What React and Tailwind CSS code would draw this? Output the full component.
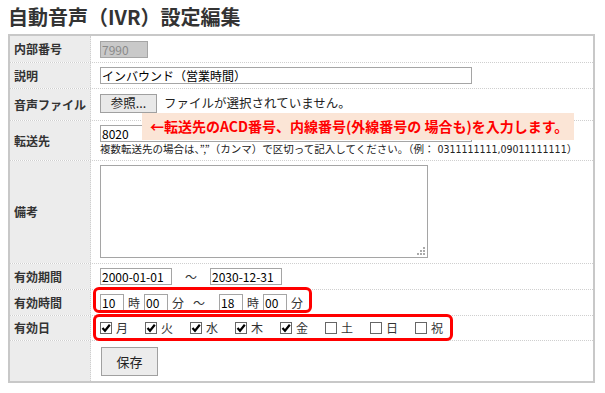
import React from "react";

const Row = ({ label, h, children, cls = "" }) => (
  <div className={`flex border-b border-dotted border-[#cfcfcf] ${h}`}>
    <div className="w-[81px] shrink-0 bg-[#ececec] border-r border-dotted border-[#cfcfcf] flex items-center pl-[4px] text-[12px] font-bold text-[#333]">
      {label}
    </div>
    <div className={`flex-1 pl-[9px] ${cls}`}>{children}</div>
  </div>
);

const Check = ({ checked, label }) => (
  <div className="flex items-center w-[45px] shrink-0">
    <span className="w-[12px] h-[12px] border border-[#666] bg-white flex items-center justify-center">
      {checked && (
        <svg width="10" height="10" viewBox="0 0 10 10">
          <path d="M1.5 5 L4 7.8 L8.8 1.8" fill="none" stroke="#000" strokeWidth="2.2" />
        </svg>
      )}
    </span>
    <span className="ml-[4px] text-[12px] text-[#333]">{label}</span>
  </div>
);

const base = "h-[17px] border border-[#a5a5a5] px-[1px] text-[12px] leading-none outline-none";
const inp = `${base} bg-white text-black`;

export default function App() {
  return (
    <div className="w-[605px] h-[393px] bg-white font-['Noto_Sans_CJK_JP',sans-serif] text-[#333] relative">
      <div className="h-[34px] flex items-center pl-[8px] text-[20px] font-bold text-[#333] leading-none">
        自動音声（IVR）設定編集
      </div>
      <div className="relative ml-[8px] w-[587px] border-2 border-[#c8c8c8]">
        <Row label="内部番号" h="h-[27px]" cls="flex items-center">
          <input disabled defaultValue="7990" className={`${base} w-[48px] bg-[#c9c9c9] text-[#8a8a8a]`} />
        </Row>
        <Row label="説明" h="h-[26px]" cls="flex items-center">
          <input defaultValue="インバウンド（営業時間）" className={`${inp} w-[372px]`} />
        </Row>
        <Row label="音声ファイル" h="h-[32px]" cls="flex items-center">
          <button className="w-[57px] h-[19px] border border-[#a0a0a0] bg-[#e9e9e9] text-[12.5px] leading-none text-[#222] flex items-center justify-center mt-[-3px]">
            参照...
          </button>
          <span className="ml-[7px] text-[12.5px] text-[#222] mt-[-3px]">ファイルが選択されていません。</span>
        </Row>
        <Row label="転送先" h="h-[40px]" cls="flex flex-col pt-[4px]">
          <input defaultValue="8020" className={`${inp} w-[372px]`} />
          <div className="text-[10.5px] leading-[14px] text-[#222] whitespace-nowrap">
            複数転送先の場合は、”,”（カンマ）で区切って記入してください。（例：<span className="font-['DejaVu_Sans_Condensed',sans-serif] text-[10.5px]"> 0311111111,09011111111</span>）
          </div>
        </Row>
        <Row label="備考" h="h-[103px]" cls="pt-[4px]">
          <div className="relative w-[328px] h-[93px] border border-[#a5a5a5] bg-white">
            <svg className="absolute right-[2px] bottom-[2px]" width="8" height="8" viewBox="0 0 8 8">
              <rect x="6" y="0" width="2" height="2" fill="#aaa" />
              <rect x="3" y="3" width="2" height="2" fill="#aaa" />
              <rect x="6" y="3" width="2" height="2" fill="#aaa" />
              <rect x="0" y="6" width="2" height="2" fill="#aaa" />
              <rect x="3" y="6" width="2" height="2" fill="#aaa" />
              <rect x="6" y="6" width="2" height="2" fill="#aaa" />
            </svg>
          </div>
        </Row>
        <Row label="有効期間" h="h-[26px]" cls="flex items-center">
          <input defaultValue="2000-01-01" className={`${inp} w-[72px]`} />
          <span className="ml-[13px] mr-[13px] text-[12px]">～</span>
          <input defaultValue="2030-12-31" className={`${inp} w-[72px]`} />
        </Row>
        <Row label="有効時間" h="h-[26px]" cls="flex items-center text-[12px] text-[#333]">
          <input defaultValue="10" className={`${inp} w-[24px]`} />
          <span className="ml-[4px] mr-[4px]">時</span>
          <input defaultValue="00" className={`${inp} w-[24px]`} />
          <span className="ml-[4px]">分</span>
          <span className="ml-[9px] mr-[14px]">～</span>
          <input defaultValue="18" className={`${inp} w-[24px]`} />
          <span className="ml-[4px] mr-[4px]">時</span>
          <input defaultValue="00" className={`${inp} w-[24px]`} />
          <span className="ml-[4px]">分</span>
        </Row>
        <Row label="有効日" h="h-[25px]" cls="flex items-center">
          <Check checked label="月" />
          <Check checked label="火" />
          <Check checked label="水" />
          <Check checked label="木" />
          <Check checked label="金" />
          <Check label="土" />
          <Check label="日" />
          <Check label="祝" />
        </Row>
        <div className="flex h-[40px]">
          <div className="w-[81px] shrink-0 bg-[#ececec] border-r border-dotted border-[#cfcfcf]" />
          <div className="flex-1 pl-[10px] pt-[6px]">
            <button className="w-[57px] h-[29px] border border-[#a0a0a0] bg-[#ececec] text-[13px] text-[#222] flex items-center justify-center">
              保存
            </button>
          </div>
        </div>

        <div className="absolute left-[132px] top-[77px] w-[432px] h-[27px] bg-[#fbe5d6] flex items-center pl-[8px] text-[14px] font-bold text-[#f00] whitespace-nowrap">
          ←転送先のACD番号、内線番号(外線番号の 場合も)を入力します。
        </div>
        <div className="absolute left-[83px] top-[251px] w-[219px] h-[26px] border-[3px] border-[#f00] rounded-[6px]" />
        <div className="absolute left-[83px] top-[278px] w-[360px] h-[27px] border-[3px] border-[#f00] rounded-[6px]" />
      </div>
    </div>
  );
}
